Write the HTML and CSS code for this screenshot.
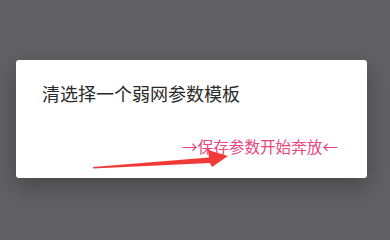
FILE: index.html
```html
<!DOCTYPE html>
<html lang="zh">
<head>
<meta charset="utf-8">
<link rel="stylesheet" href="styles.css">
</head>
<body>
<div class="card">
  <div class="title">清选择一个弱网参数模板</div>
  <div class="action">→保存参数开始奔放←</div>
  <svg class="arrow" viewBox="0 0 351 118" width="351" height="118">
    <polygon points="77,107 193,97.5 192,90 212,96 196,107 194,103 77,108.5" fill="#f13a36"/>
  </svg>
</div>
</body>
</html>
```
FILE: styles.css
```css
html, body {
  margin: 0;
  padding: 0;
}
body {
  width: 390px;
  height: 237px;
  background: #616163;
  font-family: "Noto Sans CJK SC", "Noto Sans", sans-serif;
  overflow: hidden;
}
.card {
  position: relative;
  margin: 60px 0 0 16px;
  width: 351px;
  height: 118px;
  box-sizing: border-box;
  background: #ffffff;
  border-radius: 3px;
  box-shadow: 0 8px 22px rgba(0, 0, 0, 0.28);
  display: flex;
  flex-direction: column;
  padding: 21px 29px 0 26px;
}
.title {
  font-size: 18px;
  line-height: 24px;
  color: #2a2a2a;
}
.action {
  margin-top: 30px;
  align-self: flex-end;
  font-size: 15.6px;
  line-height: 22px;
  color: #e8467c;
}
.arrow {
  position: absolute;
  left: 0;
  top: 0;
}
```
